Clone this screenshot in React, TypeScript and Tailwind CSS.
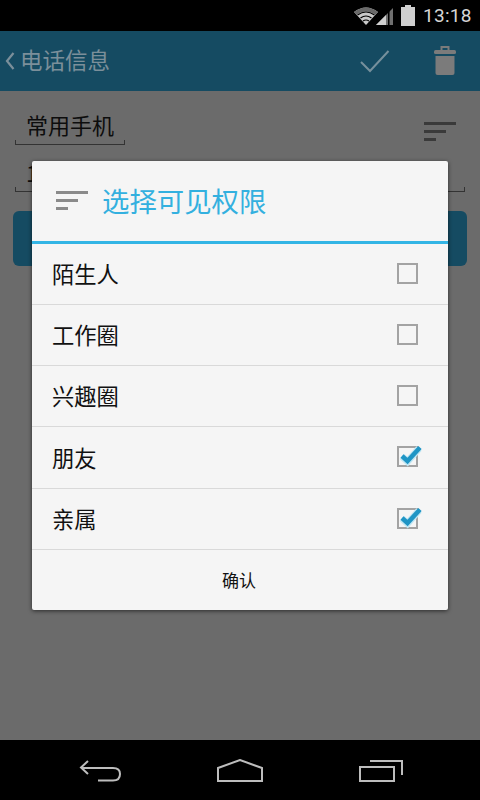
import React from "react";

function SortIcon({ color }: { color: string }) {
  return (
    <svg width="32" height="20" viewBox="0 0 32 20" fill={color}>
      <rect x="0" y="0" width="32" height="3" />
      <rect x="0" y="8" width="22" height="3" />
      <rect x="0" y="16" width="12" height="3" />
    </svg>
  );
}

function Underlined({ className, children }: { className: string; children?: React.ReactNode }) {
  return (
    <div className={"relative border-b border-[#333333] " + className}>
      <span className="absolute left-0 bottom-0 h-[4px] w-px bg-[#333333]" />
      <span className="absolute right-0 bottom-0 h-[4px] w-px bg-[#333333]" />
      {children}
    </div>
  );
}

function Check({ checked }: { checked: boolean }) {
  return (
    <div className="relative top-[-1px] w-[21px] h-[21px] border-2 border-[#a3a3a3] box-border">
      {checked && (
        <svg className="absolute left-[-2px] top-[-8px]" width="28" height="28" viewBox="0 0 28 28" fill="none">
          <path d="M5 16.5 L10.5 21.5 L22 8.5" stroke="#bfe6f3" strokeWidth="7" />
          <path d="M5 16 L10.5 21 L23 7.5" stroke="#1f95c5" strokeWidth="4.5" />
        </svg>
      )}
    </div>
  );
}

function Row({ label, checked, tall }: { label: string; checked?: boolean; tall?: boolean }) {
  return (
    <div
      className={
        (tall ? "h-[62px]" : "h-[61px]") +
        " flex items-center justify-between pl-[20px] pr-[30px] border-b border-[#d9d9d9]"
      }
    >
      <span className="text-[22.3px] leading-[30px] text-[#111111] relative top-[-1px]">{label}</span>
      <Check checked={!!checked} />
    </div>
  );
}

export default function App() {
  return (
    <div className="relative w-[480px] h-[800px] overflow-hidden flex flex-col bg-[#6b6b6b]">
      <div
        className="h-[31px] bg-black flex items-center justify-end pr-[8px] gap-[5px]"
        style={{ fontFamily: "Roboto, sans-serif" }}
      >
        <svg width="26" height="20" viewBox="0 0 26 20" className="mr-[-9px]">
          <path d="M0 6 Q12 -3 24 6 L12 19 Z" fill="#c9c9c9" />
          <path d="M0 6 Q12 -3 24 6 L21.5 8.8 Q12 2 2.5 8.8 Z" fill="#6a6a6a" />
          <path d="M3.5 9 Q12 3 20.5 9" stroke="#000" strokeWidth="1.2" fill="none" />
          <path d="M6.5 12 Q12 8 17.5 12" stroke="#000" strokeWidth="1.2" fill="none" />
          <path d="M9 15 Q12 13 15 15" stroke="#000" strokeWidth="1.2" fill="none" />
        </svg>
        <svg width="18" height="20" viewBox="0 0 18 20">
          <path d="M0 19 L17 2 L17 19 Z" fill="#6f6f6f" />
          <path d="M0 19 L10 9 L10 19 Z" fill="#d0d0d0" />
          <rect x="12" y="3" width="1.5" height="16" fill="#000" />
        </svg>
        <svg width="14" height="21" viewBox="0 0 14 21" className="ml-[2px]">
          <rect x="4" y="0" width="6" height="2" fill="#cfcfcf" />
          <rect x="0" y="2" width="14" height="19" fill="#cfcfcf" />
        </svg>
        <span className="text-[#d6d6d6] text-[19px] leading-none ml-[3px] w-[49px] tracking-[0.3px]">13:18</span>
      </div>

      <div
        className="h-[60px] bg-[#154b62] flex items-center"
        style={{ fontFamily: '"Noto Sans CJK SC", sans-serif' }}
      >
        <svg width="12" height="20" viewBox="0 0 12 20" className="ml-[4px]">
          <path d="M9.5 2 L3 10 L9.5 18" stroke="#7b8f9a" strokeWidth="2.2" fill="none" />
        </svg>
        <span className="text-[22.5px] leading-[30px] text-[#7b8f9a] ml-[4px] relative top-[-2px]">电话信息</span>
        <svg width="32" height="26" viewBox="0 0 32 26" className="ml-auto">
          <path d="M2 14 L11 23 L29.5 3" stroke="#76909c" strokeWidth="2" fill="none" />
        </svg>
        <svg width="22" height="30" viewBox="0 0 22 30" className="ml-[43px] mr-[24px]">
          <path d="M7.5 4 V1 H14.5 V4" stroke="#7b7b7b" strokeWidth="2" fill="none" />
          <rect x="0" y="4" width="22" height="4" rx="1.5" fill="#7b7b7b" />
          <path d="M1.5 10 H20.5 V27 Q20.5 29 18.5 29 H3.5 Q1.5 29 1.5 27 Z" fill="#7b7b7b" />
        </svg>
      </div>

      <div
        className="flex-1 flex flex-col px-[15px] pt-[20px]"
        style={{ fontFamily: '"Noto Sans CJK SC", sans-serif' }}
      >
        <div className="flex items-start justify-between pr-[9px]">
          <Underlined className="w-[110px] h-[34px] pl-[11px]">
            <span className="text-[22px] leading-[30px] text-[#0d0d0d] relative top-[-2px]">常用手机</span>
          </Underlined>
          <div className="pt-[11px]">
            <SortIcon color="#3a3a3a" />
          </div>
        </div>
        <Underlined className="w-[450px] h-[47px] pl-[11px] pt-[12px]">
          <span className="text-[22px] leading-[30px] text-[#0d0d0d]">1</span>
        </Underlined>
        <div className="w-[454px] h-[55px] ml-[-2px] mt-[19px] rounded-[6px] bg-[#154b62]" />
      </div>

      <div className="h-[60px] bg-black flex items-center justify-center">
        <div className="flex items-center gap-[96px] pt-[1px] ml-[2px]">
          <svg width="42" height="24" viewBox="0 0 42 24" fill="none" stroke="#bdbdbd" strokeWidth="2">
            <path d="M9 2 L2 8.5 L9 15" />
            <path d="M2 9 H34 Q41 9 41 15 Q41 21.5 34 21.5 H19" />
          </svg>
          <svg width="46" height="24" viewBox="0 0 46 24" fill="none" stroke="#bdbdbd" strokeWidth="2">
            <path d="M1 9 L23 1 L45 9 V22 H1 Z" />
          </svg>
          <svg width="44" height="24" viewBox="0 0 44 24" fill="none" stroke="#bdbdbd" strokeWidth="2">
            <rect x="1" y="8" width="34" height="14" />
            <path d="M11 2 H43 V16" />
          </svg>
        </div>
      </div>

      <div
        className="absolute left-[32px] top-[161px] w-[416px] h-[449px] bg-[#f5f5f5] rounded-[2px] shadow-[0_1px_4px_rgba(0,0,0,0.6)] flex flex-col"
        style={{ fontFamily: '"Noto Sans CJK SC", sans-serif' }}
      >
        <div className="h-[80px] flex items-center pl-[24px] gap-[14px]">
          <SortIcon color="#8a8a8a" />
          <span className="text-[27.4px] leading-[36px] text-[#33b0df] relative top-[-1px]">选择可见权限</span>
        </div>
        <div className="h-[3px] bg-[#33b5e5]" />
        <Row label="陌生人" />
        <Row label="工作圈" />
        <Row label="兴趣圈" />
        <Row label="朋友" checked tall />
        <Row label="亲属" checked />
        <div className="flex-1 flex items-center justify-center pr-[2px] text-[17px] text-[#111111]">确认</div>
      </div>
    </div>
  );
}
